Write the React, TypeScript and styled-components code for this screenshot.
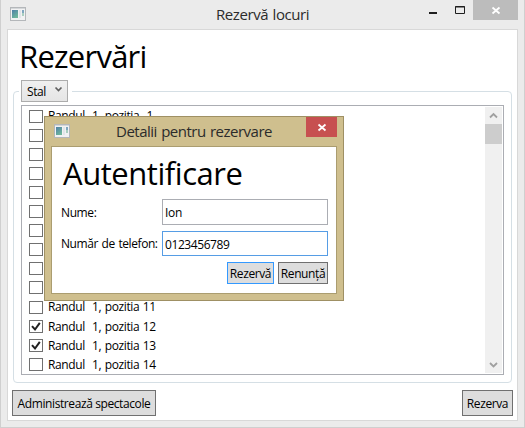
import React from 'react';
import styled, { createGlobalStyle } from 'styled-components';

const GlobalStyle = createGlobalStyle`
  * { box-sizing: border-box; }
  body { margin: 0; overflow: hidden; }
  button, input { font: inherit; letter-spacing: inherit; color: inherit; }
`;

const Window = styled.main`
  position: relative;
  display: flex;
  flex-direction: column;
  width: 525px;
  height: 428px;
  padding: 0 6px 6px;
  border: 1px solid #cfcfcf;
  border-top: 0;
  background: #ebebeb;
  color: #000;
  font: 12px/16px 'Open Sans', 'Noto Sans', sans-serif;
  letter-spacing: -0.4px;
  word-spacing: 0.9px;
`;

const TitleBar = styled.header`
  display: flex;
  align-items: flex-start;
  flex: 0 0 29px;
  color: #2b2b2b;
`;

const AppIconSvg = styled.svg<{ $left: number; $top: number }>`
  display: block;
  flex: none;
  margin: ${(p) => p.$top}px 0 0 ${(p) => p.$left}px;
`;

const Title = styled.h1<{ $left: number; $top: number; $spacing: number }>`
  flex: 1;
  margin: ${(p) => p.$top}px 0 0 ${(p) => p.$left}px;
  font-size: 15px;
  line-height: 20px;
  font-weight: 400;
  letter-spacing: ${(p) => p.$spacing}px;
  white-space: nowrap;
`;

const CaptionButton = styled.button<{ $width: number; $height?: number; $fill?: string }>`
  display: block;
  flex: none;
  width: ${(p) => p.$width}px;
  height: ${(p) => p.$height ?? 20}px;
  padding: 0;
  border: 0;
  background: ${(p) => p.$fill ?? 'transparent'};
  svg { display: block; }
`;

const Client = styled.section`
  display: flex;
  flex-direction: column;
  flex: 1;
  border: 1px solid #d8d8d8;
  background: #fff;
`;

const Heading = styled.h2<{ $spacing: number; $margin: string }>`
  margin: ${(p) => p.$margin};
  font-size: 31px;
  line-height: 42px;
  font-weight: 400;
  letter-spacing: ${(p) => p.$spacing}px;
  white-space: nowrap;
`;

const Group = styled.fieldset`
  display: flex;
  flex-direction: column;
  width: 499px;
  height: 303px;
  margin: 0 0 0 5px;
  padding: 3px 7px 8px;
  border: 1px solid #d5dfe5;
  border-radius: 4px;
  min-width: 0;
`;

const GroupLegend = styled.legend`
  margin-left: -2px;
  padding: 0 4px 0 2px;
`;

const Combo = styled.button`
  display: flex;
  align-items: center;
  width: 47px;
  height: 22px;
  padding: 1px 4px 0 5px;
  border: 1px solid #acacac;
  background: linear-gradient(#f0f0f0, #e5e5e5);
  svg { margin: -4px 0 0 auto; }
`;

const ListBox = styled.div`
  display: flex;
  flex: none;
  height: 270px;
  border: 1px solid #abadb3;
  padding: 1px;
  background: #fff;
`;

const Seats = styled.ul`
  flex: 1;
  margin: 0;
  padding: 0 0 0 6px;
  list-style: none;
  overflow: hidden;
`;

const Seat = styled.li<{ $tall: boolean }>`
  display: flex;
  align-items: flex-start;
  height: ${(p) => (p.$tall ? 20 : 19)}px;
  padding-top: 3px;
  white-space: pre;
`;

const CheckBox = styled.span`
  flex: none;
  width: 14px;
  height: 13px;
  margin-right: 5px;
  border: 1px solid #707070;
  background: #fff;
  svg { display: block; }
`;

const SeatLabel = styled.span<{ $raised: boolean; $covered: boolean }>`
  margin-top: ${(p) => (p.$raised ? -2 : -1)}px;
  visibility: ${(p) => (p.$covered ? 'hidden' : 'visible')};
`;

const ScrollBar = styled.div`
  display: flex;
  flex-direction: column;
  width: 17px;
  background: #f0f0f0;
  svg { display: block; flex: none; }
`;

const Thumb = styled.div`
  height: 20px;
  background: #cdcdcd;
`;

const Track = styled.div`
  flex: 1;
`;

const Footer = styled.footer`
  display: flex;
  justify-content: space-between;
  padding: 7px 4px 0;
`;

const Button = styled.button<{ $width: number; $height: number; $spacing?: number; $active?: boolean }>`
  display: flex;
  justify-content: center;
  align-items: center;
  width: ${(p) => p.$width}px;
  height: ${(p) => p.$height}px;
  padding: 1px 0 0;
  border: 1px solid ${(p) => (p.$active ? '#3399ff' : '#707070')};
  background: #ddd;
  letter-spacing: ${(p) => p.$spacing ?? -0.4}px;
  white-space: nowrap;
`;

const Dialog = styled.section`
  position: absolute;
  left: 43px;
  top: 116px;
  display: flex;
  flex-direction: column;
  width: 300px;
  height: 185px;
  padding: 0 6px 6px;
  border: 1px solid #9f9064;
  background: #cfbf8e;
`;

const DialogClient = styled.div`
  display: flex;
  flex-direction: column;
  flex: 1;
  border: 1px solid #ab9d70;
  background: #fff;
`;

const Form = styled.div`
  display: grid;
  grid-template-columns: 101px 166px;
  grid-template-rows: 26px 25px;
  row-gap: 6px;
  margin: 4px 0 0 9px;
`;

const Label = styled.label<{ $spacing: number; $top: number }>`
  padding-top: ${(p) => p.$top}px;
  letter-spacing: ${(p) => p.$spacing}px;
  white-space: nowrap;
`;

const Field = styled.input<{ $focused?: boolean; $spacing: number }>`
  width: 166px;
  height: 100%;
  padding: 1px 2px 0;
  border: 1px solid ${(p) => (p.$focused ? '#569de5' : '#abadb3')};
  border-radius: 0;
  outline: 0;
  background: #fff;
  letter-spacing: ${(p) => p.$spacing}px;
`;

const Actions = styled.div`
  display: flex;
  justify-content: flex-end;
  gap: 4px;
  padding: 6px 8px 0 0;
`;

const AppIcon = ({ left, top, id }: { left: number; top: number; id: string }) => (
  <AppIconSvg $left={left} $top={top} width="16" height="14" viewBox="0 0 16 14">
    <defs>
      <linearGradient id={id} x1="0" y1="0" x2="0.6" y2="1">
        <stop offset="0" stopColor="#4f7fa8" />
        <stop offset="1" stopColor="#6fb79c" />
      </linearGradient>
    </defs>
    <rect x="0.5" y="0.5" width="15" height="13" fill="#f2f2f3" stroke="#b4b7ba" />
    <path d="M1 1.5h14" stroke="#d3d6d8" />
    <path d="M2 3h6v8H2z" fill={`url(#${id})`} />
    <path d="M9 3h2v8H9z" fill="#e2e6e9" />
    <path d="M12 3h2v3h-2z" fill="#7fa6c0" />
    <path d="M12 6h2v3h-2z" fill="#a9cfc0" />
  </AppIconSvg>
);

const Cross = ({ x, y, width, height }: { x: number; y: number; width: number; height: number }) => (
  <svg width={width} height={height}>
    <path d={`M${x} ${y}l7 6M${x + 7} ${y}l-7 6`} stroke="#fff" strokeWidth="1.8" />
  </svg>
);

const Check = () => (
  <svg width="12" height="11">
    <path d="M2 5.2l3 3.3L9.8 1.8" fill="none" stroke="#212121" strokeWidth="2" />
  </svg>
);

const SEATS = Array.from({ length: 14 }, (_, i) => i + 1);
const RESERVED = [12, 13];
const isBehindDialog = (n: number) => n > 1 && n < 11;

export default function App() {
  return (
    <>
      <GlobalStyle />
      <Window>
        <TitleBar>
          <AppIcon left={3} top={7} id="mainIcon" />
          <Title $left={190} $top={4} $spacing={-0.42}>Rezervă locuri</Title>
          <CaptionButton $width={27} aria-label="Minimize">
            <svg width="27" height="20"><path d="M6 13h8" stroke="#1e1e1e" strokeWidth="2" /></svg>
          </CaptionButton>
          <CaptionButton $width={23} aria-label="Maximize">
            <svg width="23" height="20">
              <path d="M5.5 6.5h9v7h-9zM5 7h10" fill="none" stroke="#1e1e1e" />
            </svg>
          </CaptionButton>
          <CaptionButton $width={45} $fill="#bcbcbc" aria-label="Close">
            <Cross x={19.5} y={7.5} width={45} height={20} />
          </CaptionButton>
        </TitleBar>
        <Client>
          <Heading $spacing={-0.75} $margin="5px 0 3px 11px">Rezervări</Heading>
          <Group>
            <GroupLegend>
              <Combo>
                Stal
                <svg width="9" height="7"><path d="M1.5 1.5l3 3 3-3" fill="none" stroke="#606060" strokeWidth="1.7" /></svg>
              </Combo>
            </GroupLegend>
            <ListBox>
              <Seats>
                {SEATS.map((n) => (
                  <Seat key={n} $tall={n === 10}>
                    <CheckBox>{RESERVED.includes(n) && <Check />}</CheckBox>
                    <SeatLabel $raised={n < 12} $covered={isBehindDialog(n)}>
                      {`Randul  1, pozitia ${String(n).padStart(2, ' ')}`}
                    </SeatLabel>
                  </Seat>
                ))}
              </Seats>
              <ScrollBar>
                <svg width="17" height="17"><path d="M5 10.5l3.5-3.5 3.5 3.5" fill="none" stroke="#a0a0a0" strokeWidth="1.8" /></svg>
                <Thumb />
                <Track />
                <svg width="17" height="17"><path d="M5 7l3.5 3.5L12 7" fill="none" stroke="#a0a0a0" strokeWidth="1.8" /></svg>
              </ScrollBar>
            </ListBox>
          </Group>
          <Footer>
            <Button $width={144} $height={26} $spacing={-0.4}>Administrează spectacole</Button>
            <Button $width={51} $height={26}>Rezerva</Button>
          </Footer>
        </Client>
        <Dialog role="dialog">
          <TitleBar>
            <AppIcon left={3} top={7} id="dialogIcon" />
            <Title $left={46} $top={4} $spacing={-0.5}>Detalii pentru rezervare</Title>
            <CaptionButton $width={31} $fill="#c75050" aria-label="Close">
              <Cross x={12.5} y={7.5} width={31} height={20} />
            </CaptionButton>
          </TitleBar>
          <DialogClient>
            <Heading $spacing={-0.45} $margin="5px 0 1px 11px">Autentificare</Heading>
            <Form>
              <Label $spacing={-0.4} $top={6} htmlFor="name">Nume:</Label>
              <Field id="name" $spacing={-0.3} defaultValue="Ion" />
              <Label $spacing={-0.42} $top={5} htmlFor="phone">Număr de telefon:</Label>
              <Field id="phone" $spacing={-0.42} $focused defaultValue="0123456789" />
            </Form>
            <Actions>
              <Button $width={47} $height={22} $active>Rezervă</Button>
              <Button $width={50} $height={22}>Renunță</Button>
            </Actions>
          </DialogClient>
        </Dialog>
      </Window>
    </>
  );
}
